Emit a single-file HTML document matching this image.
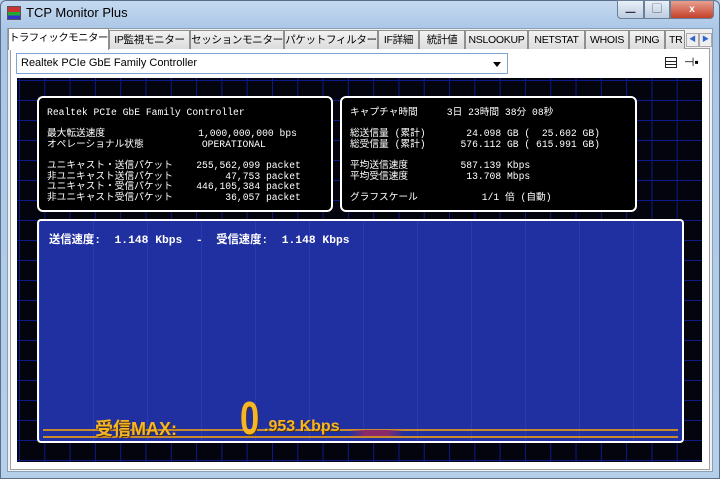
<!DOCTYPE html>
<html><head><meta charset="utf-8"><style>
*{margin:0;padding:0;box-sizing:border-box}
body{width:720px;height:479px;overflow:hidden;background:#b9d1ea;font-family:"Liberation Sans","Noto Sans CJK JP",sans-serif;position:relative}
.win{position:absolute;left:0;top:0;width:720px;height:479px;background:linear-gradient(#c4d9ef,#a9c6e6 30px,#b6cfe9);border:1px solid #5a6f8a;border-radius:6px 6px 0 0}
.title{position:absolute;left:26px;top:5px;font-size:13px;color:#000}
.ico{position:absolute;left:7px;top:6px;width:14px;height:14px;border:1px solid #555;background:linear-gradient(#c33 40%,#2a3 40%,#2a3 70%,#33c 70%)}
.btns{position:absolute;right:6px;top:0;height:19px;display:flex}
.btns div{height:19px;border:1px solid #6a7f99;background:linear-gradient(#e8f0f8,#bccde0);font-size:10px;text-align:center;line-height:17px;color:#334}
.inner{position:absolute;left:7px;top:28px;width:706px;height:444px;background:#f0f0f0;border:1px solid #8aa0b8}
.tab{position:absolute;top:30px;height:19px;border:1px solid #8e8f8f;border-bottom:none;background:linear-gradient(#f2f2f2,#dcdcdc);font-size:10.5px;line-height:18px;text-align:center;white-space:nowrap;overflow:hidden;letter-spacing:-.3px}
.tab.act{background:#fff;top:28px;height:22px;z-index:2;font-size:10.3px;line-height:19px;letter-spacing:-.4px}
.content{position:absolute;left:10px;top:48px;width:700px;height:422px;background:#fff;border:1px solid #a0a0a0}
.dd{position:absolute;left:16px;top:53px;width:492px;height:21px;border:1px solid #7ea4d0;background:#fff;font-size:11px;line-height:19px;padding-left:4px}
.dd:after{content:"";position:absolute;right:6px;top:8px;border:4px solid transparent;border-top:5px solid #000}
.graph{position:absolute;left:17px;top:78px;width:685px;height:384px;background-color:#04040f;
background-image:linear-gradient(90deg,#0c1a8a 1px,transparent 1px),linear-gradient(#0c1a8a 1px,transparent 1px);background-size:25.3px 20px;background-position:2px 2px}
.box{position:absolute;background:#000;border:2px solid #fff;border-radius:6px;color:#fff;font-family:"Liberation Mono","Noto Sans CJK JP",monospace;font-size:9.7px;line-height:10.6px;white-space:pre}
.blue{position:absolute;left:37px;top:219px;width:647px;height:224px;background:#2130a0;border:2px solid #fff;border-radius:4px;
background-image:linear-gradient(90deg,#2a3cb0 1px,transparent 1px);background-size:54px 100%}
.sp{position:absolute;left:10px;top:10px;color:#fff;font-size:11.3px;font-weight:bold;font-family:"Liberation Mono","Noto Sans CJK JP",monospace;white-space:pre}
.gl{position:absolute;left:4px;right:4px;height:2px;background:#c88a2a}
.max{position:absolute;color:#f5b525;font-family:"Liberation Sans","Noto Sans CJK JP",sans-serif;font-weight:bold;white-space:nowrap;text-shadow:1px 1px 0 #4a3008}
</style></head><body>
<div class="win"></div>
<div class="ico"></div><div class="title">TCP Monitor Plus</div>
<div class="btns"><div style="width:27px;border-radius:0 0 0 4px">▁</div><div style="width:26px">▢</div><div style="width:44px;background:linear-gradient(#e8a090,#c4402a);color:#fff;font-weight:bold;border-radius:0 0 4px 0">x</div></div>
<div class="inner"></div>
<div class="content"></div>
<div class="tab act" style="left:8px;width:101px">トラフィックモニター</div>
<div class="tab" style="left:109px;width:81px">IP監視モニター</div>
<div class="tab" style="left:190px;width:94px">セッションモニター</div>
<div class="tab" style="left:284px;width:94px">パケットフィルター</div>
<div class="tab" style="left:378px;width:41px">IF詳細</div>
<div class="tab" style="left:419px;width:46px">統計値</div>
<div class="tab" style="left:465px;width:63px">NSLOOKUP</div>
<div class="tab" style="left:528px;width:57px">NETSTAT</div>
<div class="tab" style="left:585px;width:44px">WHOIS</div>
<div class="tab" style="left:629px;width:36px">PING</div>
<div class="tab" style="left:665px;width:20px;text-align:left;padding-left:3px">TR</div>
<div style="position:absolute;left:686px;top:33px;width:13px;height:14px;border:1px solid #aaa;background:#eee;font-size:7px;color:#36c;text-align:center;line-height:12px">◀</div>
<div style="position:absolute;left:699px;top:33px;width:13px;height:14px;border:1px solid #aaa;background:#eee;font-size:7px;color:#36c;text-align:center;line-height:12px">▶</div>
<div class="dd">Realtek PCIe GbE Family Controller</div>
<div style="position:absolute;left:665px;top:57px;width:12px;height:11px;border:1.5px solid #222;background:linear-gradient(#fff 3px,#222 3px,#222 4px,#fff 4px,#fff 6px,#222 6px,#222 7px,#fff 7px)"></div>
<div style="position:absolute;left:684px;top:55px;font-size:12px">⊣▪</div>
<div class="graph"></div>
<div class="box" style="left:37px;top:96px;width:296px;height:116px;padding:10px 0 0 8px">Realtek PCIe GbE Family Controller

最大転送速度                1,000,000,000 bps
オペレーショナル状態          OPERATIONAL

ユニキャスト・送信パケット    255,562,099 packet
非ユニキャスト送信パケット         47,753 packet
ユニキャスト・受信パケット    446,105,384 packet
非ユニキャスト受信パケット         36,057 packet</div>
<div class="box" style="left:340px;top:96px;width:297px;height:116px;padding:10px 0 0 8px">キャプチャ時間     3日 23時間 38分 08秒

総送信量 (累計)       24.098 GB (  25.602 GB)
総受信量 (累計)      576.112 GB ( 615.991 GB)

平均送信速度         587.139 Kbps
平均受信速度          13.708 Mbps

グラフスケール           1/1 倍 (自動)</div>
<div class="blue">
<div class="sp">送信速度:  1.148 Kbps  -  受信速度:  1.148 Kbps</div>
<div class="gl" style="top:208px"></div>
<div class="gl" style="top:215px"></div>
<div style="position:absolute;left:310px;top:209px;width:55px;height:6px;background:linear-gradient(90deg,transparent,#8a2a6a 30%,#8a2a6a 70%,transparent)"></div>
<div class="max" style="left:56px;top:194px;font-size:18px">受信MAX:</div>
<div class="max" style="left:201px;top:174px;font-size:46px;line-height:46px;transform:scaleX(.75);transform-origin:left">0</div>
<div class="max" style="left:225px;top:197px;font-size:16px">.953 Kbps</div>
</div>
</body></html>
